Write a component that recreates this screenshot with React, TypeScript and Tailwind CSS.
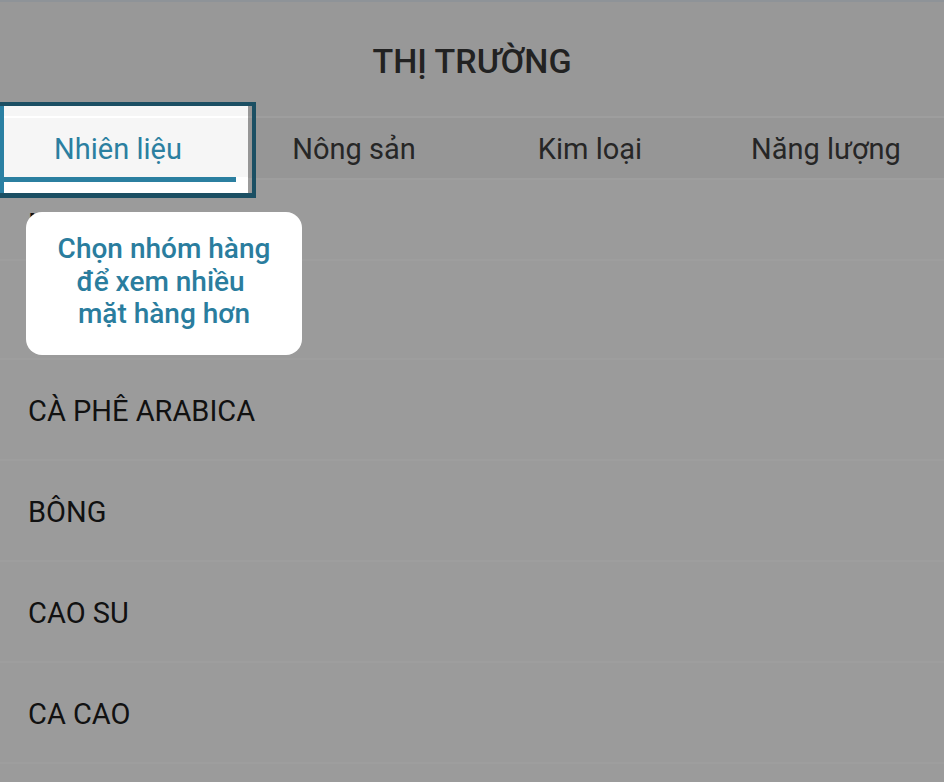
import React from "react";

const tabs = ["Nhiên liệu", "Nông sản", "Kim loại", "Năng lượng"];
const rows = [
  { name: "Mặt hàng", h: "h-[81px]", pt: "pt-[10px]" },
  { name: "CÀ PHÊ ROBUSTA", h: "h-[99px]", pt: "pt-[3px]" },
  { name: "CÀ PHÊ ARABICA", h: "h-[101px]", pt: "pt-[4px]" },
  { name: "BÔNG", h: "h-[101px]", pt: "pt-[4px]" },
  { name: "CAO SU", h: "h-[101px]", pt: "pt-[4px]" },
  { name: "CA CAO", h: "h-[101px]", pt: "pt-[4px]" },
  { name: "", h: "h-[101px]", pt: "pt-[4px]" },
];

export default function App() {
  return (
    <div className="relative w-[944px] h-[782px] overflow-hidden bg-white font-[Roboto,sans-serif]">
      {/* underlying app */}
      <div className="flex flex-col">
        <div className="h-[116px] border-t-2 border-[#e5edf5] bg-[#f6f6f6] flex items-center justify-center pt-[5px]">
          <h1 className="text-[34px] font-medium text-[#383838] leading-normal">THỊ TRƯỜNG</h1>
        </div>
        <div className="h-[62px] border-t-2 border-white bg-[#f2f2f2] grid grid-cols-4">
          {tabs.map((t) => (
            <div key={t} className="flex items-center justify-center pt-[4px] text-[29px] text-[#3e3e3e]">
              {t}
            </div>
          ))}
        </div>
        <div className="flex flex-col">
          {rows.map((r, i) => (
            <div
              key={i}
              className={`${r.h} ${r.pt} shrink-0 border-t-2 border-white bg-[#fbfbfb] flex items-center pl-[28px] text-[29px] text-[#1c1c1c]`}
            >
              {r.name}
            </div>
          ))}
        </div>
      </div>

      {/* dim overlay */}
      <div className="absolute inset-0 bg-black/[0.38]" />

      {/* spotlight on selected tab */}
      <div className="absolute left-0 top-[102px] w-[256px] h-[96px] border-t-4 border-r-4 border-b-[5px] border-[#1b4f63] flex">
        <div className="w-[4px] bg-[#2a80a3]" />
        <div className="w-[244px] flex flex-col">
          <div className="h-[10px] bg-[#f6f6f6]" />
          <div className="h-[2px] bg-white" />
          <div className="h-[59px] bg-[#f6f6f6] flex">
            <div className="w-[228px] flex items-center justify-center pt-[4px] text-[29px] text-[#2b7fa0]">
              Nhiên liệu
            </div>
          </div>
          <div className="h-[5px] bg-white flex">
            <div className="w-[232px] bg-[#2b7fa0]" />
          </div>
          <div className="flex-1 bg-white" />
        </div>
        <div className="flex-1" />
      </div>

      {/* tooltip */}
      <div className="absolute left-[26px] top-[212px] w-[276px] h-[143px] rounded-[16px] bg-white pt-[21px] text-center text-[28px] leading-[32.5px] font-medium text-[#2a7d9e]">
        <div>Chọn nhóm hàng</div>
        <div>để xem nhiều&nbsp;</div>
        <div>mặt hàng hơn</div>
      </div>
    </div>
  );
}
